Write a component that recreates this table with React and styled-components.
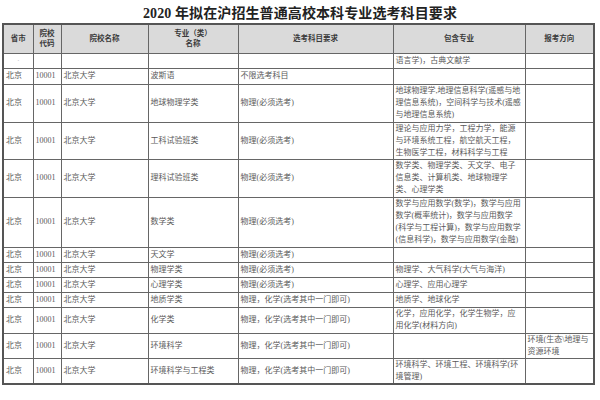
import React from "react";
import styled, { createGlobalStyle } from "styled-components";

const Global = createGlobalStyle`
  html, body { margin: 0; padding: 0; background: #fff; }
  body { width: 600px; height: 400px; overflow: hidden; font-family: "Liberation Serif", "Noto Sans CJK SC", serif; }
`;

const Page = styled.div`
  width: 600px;
  height: 400px;
  display: flex;
  flex-direction: column;
  align-items: flex-start;
  padding: 5px 0 0 2px;
  box-sizing: border-box;
`;

const Title = styled.h1`
  margin: 0;
  width: 596px;
  text-align: center;
  font-size: 14px;
  line-height: 17px;
  font-weight: 700;
  color: #222;
  letter-spacing: 0.1px;
  height: 18px;
`;

const Table = styled.table`
  border-collapse: collapse;
  table-layout: fixed;
  width: 591px;
  border: 2px solid #555;
  color: #5a5a5a;
  font-size: 8px;
  line-height: 12px;
`;

const Row = styled.tr`
  height: ${(p) => p.$h}px;
`;

const Head = styled.th`
  background: #dadada;
  border: 1px solid #666;
  font-weight: 700;
  font-size: 7.5px;
  line-height: 10px;
  color: #3a3a3a;
  text-align: center;
  vertical-align: middle;
  padding: 0 1px;
`;

const Cell = styled.td`
  border: 1px solid #666;
  padding: 0 2px;
  vertical-align: middle;
  text-align: ${(p) => (p.$center ? "center" : "left")};
  word-break: break-all;
  overflow: hidden;
  color: ${(p) => (p.$faint ? "#bbb" : "inherit")};
`;

const cols = [30, 28, 87, 90, 155, 132, 69];

const rows = [
  { h: 16, m: "波斯语", r: "不限选考科目", inc: "", dir: "" },
  {
    h: 38,
    m: "地球物理学类",
    r: "物理(必须选考)",
    inc: "地球物理学,地理信息科学(遥感与地理信息系统)，空间科学与技术(遥感与地理信息系统)",
    dir: "",
  },
  {
    h: 36,
    m: "工科试验班类",
    r: "物理(必须选考)",
    inc: "理论与应用力学，工程力学，能源与环境系统工程，航空航天工程，生物医学工程，材料科学与工程",
    dir: "",
  },
  {
    h: 38,
    m: "理科试验班类",
    r: "物理(必须选考)",
    inc: "数学类、物理学类、天文学、电子信息类、计算机类、地球物理学类、心理学类",
    dir: "",
  },
  {
    h: 50,
    m: "数学类",
    r: "物理(必须选考)",
    inc: "数学与应用数学(数学)，数学与应用数学(概率统计)，数学与应用数学(科学与工程计算)，数学与应用数学(信息科学)，数学与应用数学(金融)",
    dir: "",
  },
  { h: 15, m: "天文学", r: "物理(必须选考)", inc: "", dir: "" },
  { h: 15, m: "物理学类", r: "物理(必须选考)", inc: "物理学、大气科学(大气与海洋)", dir: "" },
  { h: 15, m: "心理学类", r: "物理(必须选考)", inc: "心理学、应用心理学", dir: "" },
  { h: 15, m: "地质学类", r: "物理，化学(选考其中一门即可)", inc: "地质学、地球化学", dir: "" },
  {
    h: 26,
    m: "化学类",
    r: "物理，化学(选考其中一门即可)",
    inc: "化学，应用化学，化学生物学，应用化学(材料方向)",
    dir: "",
  },
  {
    h: 25,
    m: "环境科学",
    r: "物理，化学(选考其中一门即可)",
    inc: "",
    dir: "环境(生态\\地理与资源环境",
  },
  {
    h: 26,
    m: "环境科学与工程类",
    r: "物理，化学(选考其中一门即可)",
    inc: "环境科学、环境工程、环境科学(环境管理)",
    dir: "",
  },
];

export default function App() {
  return (
    <>
      <Global />
      <Page>
        <Title>2020 年拟在沪招生普通高校本科专业选考科目要求</Title>
        <Table>
          <colgroup>
            {cols.map((w, i) => (
              <col key={i} style={{ width: w }} />
            ))}
          </colgroup>
          <thead>
            <Row $h={29}>
              <Head>省市</Head>
              <Head>
                院校
                <br />
                代码
              </Head>
              <Head>院校名称</Head>
              <Head>
                专业（类）
                <br />
                名称
              </Head>
              <Head>选考科目要求</Head>
              <Head>包含专业</Head>
              <Head>报考方向</Head>
            </Row>
          </thead>
          <tbody>
            <Row $h={15}>
              <Cell $center $faint>·</Cell>
              <Cell />
              <Cell />
              <Cell />
              <Cell />
              <Cell>语言学)，古典文献学</Cell>
              <Cell />
            </Row>
            {rows.map((r, i) => (
              <Row key={i} $h={r.h}>
                <Cell>北京</Cell>
                <Cell>10001</Cell>
                <Cell>北京大学</Cell>
                <Cell>{r.m}</Cell>
                <Cell>{r.r}</Cell>
                <Cell>{r.inc}</Cell>
                <Cell>{r.dir}</Cell>
              </Row>
            ))}
          </tbody>
        </Table>
      </Page>
    </>
  );
}
